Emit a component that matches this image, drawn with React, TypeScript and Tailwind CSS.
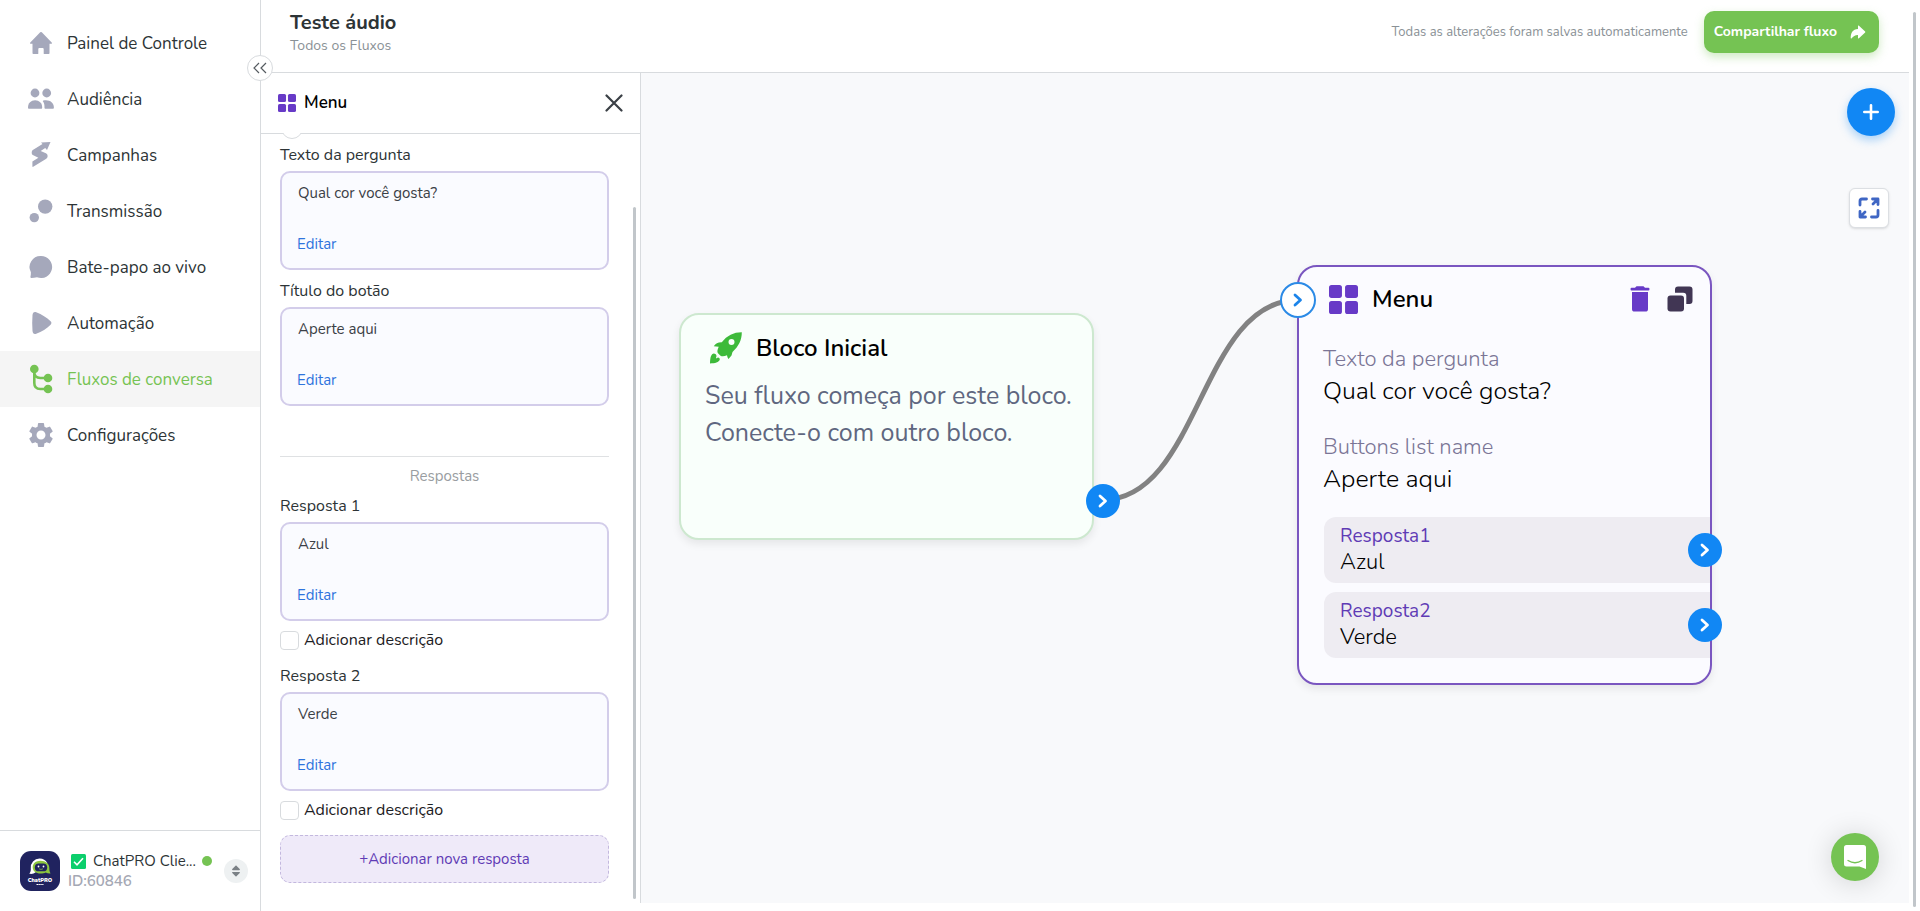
import { ReactNode, useState } from "react";
import clsx from "clsx";
import { FaSort } from "react-icons/fa";
import { IoArrowRedo } from "react-icons/io5";
import { MdSettings } from "react-icons/md";

const pageData = {
  title: "Teste áudio",
  breadcrumb: "Todos os Fluxos",
  saved: "Todas as alterações foram salvas automaticamente",
  share: "Compartilhar fluxo",
  questions: [
    { label: "Texto da pergunta", value: "Qual cor você gosta?" },
    { label: "Título do botão", value: "Aperte aqui" },
  ],
  answers: ["Azul", "Verde"],
};

function NavIcon({ children }: { children: ReactNode }) {
  return (
    <svg
      viewBox="0 0 26 26"
      className="size-[26px] shrink-0 overflow-visible"
      fill="currentColor"
    >
      {children}
    </svg>
  );
}

const navItems = [
  {
    label: "Painel de Controle",
    icon: (
      <NavIcon>
        <path d="M12.2 2.3a1.2 1.2 0 0 1 1.6 0L23.7 12.4c.6.7.2 1.4-.6 1.4h-1.6v9.4c0 .5-.3.8-.8.8h-4.4c-.4 0-.6-.2-.6-.6v-4.2c0-.7-.5-1.2-1.2-1.2h-3c-.7 0-1.2.5-1.2 1.2v4.2c0 .4-.2.6-.6.6H5.3c-.5 0-.8-.3-.8-.8v-9.4H2.9c-.8 0-1.2-.7-.6-1.4z" />
      </NavIcon>
    ),
  },
  {
    label: "Audiência",
    icon: (
      <NavIcon>
        <circle cx="7" cy="7" r="4.4" />
        <circle cx="18.7" cy="7" r="4.4" />
        <path d="M0 21.5c0-4.3 3-7.3 7.1-7.3s7.1 3 7.1 7.3c0 .9-.4 1.3-1.1 1.3h-12C.4 22.800 0 22.4 0 21.5z" />
        <path d="M15.3 14.6c5.6-1.3 10.6 1.600 10.6 6.9 0 .9-.4 1.3-1.1 1.3h-7.2c-.7 0-1.1-.4-1.1-1.1 0-2.7-.2-4.5-1.500-6.1-.3-.4-.1-.9.3-1z" />
      </NavIcon>
    ),
  },
  {
    label: "Campanhas",
    icon: (
      <NavIcon>
        <path d="M13 .4 22.5 0 19 8l-1.800-2-4.500 3 5.2 2.300c2.100 1 2.400 4.200.4 5.400L5.2 24.8c-.5.2-.8 0-.8-.5v-4.800l6-3.800-5.600-2.600c-1.500-.9-1.500-4.200 0-5.200l9.7-5.900z" />
      </NavIcon>
    ),
  },
  {
    label: "Transmissão",
    icon: (
      <NavIcon>
        <circle cx="17.2" cy="8.6" r="7.2" />
        <circle cx="6.3" cy="19.6" r="4.7" />
      </NavIcon>
    ),
  },
  {
    label: "Bate-papo ao vivo",
    icon: (
      <NavIcon>
        <path d="M13 2a11 11 0 1 1-4 21.2c-2 .3-4 .7-5.8.8-.6 0-.9-.4-.8-.9.3-1.7.6-3.3.5-4.9A11 11 0 0 1 13 2z" />
      </NavIcon>
    ),
  },
  {
    label: "Automação",
    icon: (
      <NavIcon>
        <path d="M4.5 5c.3-2.5 1.5-3.5 3.7-2.8C14 4.4 18.6 7.4 22.6 11.3c1.1 1.2 1.1 2.2 0 3.4-4 3.9-8.6 6.9-14.4 9.1-2.2.7-3.4-.3-3.7-2.8-.4-5.3-.4-10.7 0-16z" />
      </NavIcon>
    ),
  },
  {
    label: "Fluxos de conversa",
    active: true,
    icon: (
      <NavIcon>
        <circle cx="6.3" cy="3" r="4.3" />
        <circle cx="20" cy="12" r="4.3" />
        <circle cx="20" cy="23" r="4.3" />
        <path
          d="M6.3 3v14c0 4 2 6 6 6H20M6.3 6c0 4 2 6 6 6H20"
          fill="none"
          stroke="currentColor"
          strokeWidth="2.6"
        />
      </NavIcon>
    ),
  },
  {
    label: "Configurações",
    icon: (
      <span className="flex size-[26px] shrink-0 items-center justify-center">
        <MdSettings className="size-[30px] shrink-0" />
      </span>
    ),
  },
];

function GridIcon({ className }: { className?: string }) {
  return (
    <svg viewBox="0 0 28 28" className={className} fill="#673ac7">
      <rect width="12.5" height="12.5" rx="2.5" />
      <rect x="15.5" width="12.5" height="12.5" rx="2.5" />
      <rect y="15.5" width="12.5" height="12.5" rx="2.5" />
      <rect x="15.5" y="15.5" width="12.5" height="12.5" rx="2.5" />
    </svg>
  );
}

function RocketIcon() {
  return (
    <svg viewBox="0 0 32 32" className="size-8 shrink-0" fill="#3dba3a">
      <path
        fillRule="evenodd"
        d="M31.8.3c.1 7.700-3.300 14.200-9.300 19.7l-1 3.500-3 3.500c-.9-1-1.200-2.500-1.500-3.700-2.500 1.200-5 1.400-6.500.5L7.8 21c-.8-1.500-.3-3.500.9-6.200l-4.900-.6c1.700-2.700 4.200-4 8-3.900C17 3.500 24 .2 31.800.3zM21.500 7a3 3 0 1 0 0 6 3 3 0 0 0 0-6z"
      />
      <path d="M4 21.500C1 22 .2 25 0 31.500c5-.3 9-1 9.800-4 .2-1-.8-2.200-2-2l-1.300 1-.5-1c.8-1 .5-2.500-.2-3.300z" />
    </svg>
  );
}

function Chevron() {
  return (
    <svg viewBox="0 0 10 14" className="h-3.5 w-2.5" fill="none">
      <path
        d="m2 2 5.5 5L2 12"
        stroke="currentColor"
        strokeWidth="2.8"
        strokeLinecap="round"
        strokeLinejoin="round"
      />
    </svg>
  );
}

function OutPort({ className }: { className: string }) {
  return (
    <button
      aria-label="Conectar"
      className={clsx(
        "absolute flex size-[34px] items-center justify-center rounded-full bg-[#1187f4] text-white",
        className
      )}
    >
      <Chevron />
    </button>
  );
}

function Avatar() {
  return (
    <svg viewBox="0 0 40 40" className="size-10 shrink-0">
      <rect width="40" height="40" rx="11" fill="#20235f" />
      <path
        d="M19.5 7.5a8.8 8.8 0 0 0-8.7 9.7c.2 2.3-.3 4-1.5 5.6 3 .3 4.7-.1 6-1.2l12-9.6a8.8 8.8 0 0 0-7.8-4.5z"
        fill="#fff"
      />
      <path
        d="M20.5 9.8c5.3 0 8.8 3.1 8.8 7 0 2 .2 3.9 1.2 5.6-2 .1-3.5-.2-4.7-.9-1.4.8-3.2 1.1-5.3 1.1-4.6 0-7.8-2.5-7.8-6.3 0-3.7 3.2-6.5 7.8-6.5z"
        fill="#8cc63f"
      />
      <rect x="14.8" y="12.5" width="12.4" height="7.8" rx="3.9" fill="#20235f" />
      <circle cx="18.5" cy="15.5" r=".9" fill="#fff" />
      <circle cx="23.5" cy="15.5" r=".9" fill="#fff" />
      <path d="M19 17.8q2 1.3 4 0" stroke="#8cc63f" strokeWidth=".7" fill="none" />
      <text x="20" y="30.5" textAnchor="middle" fontSize="5.500" fontWeight="900" fill="#fff">
        ChatPRO
      </text>
      <path d="M16.5 33.5h7" stroke="#fff" strokeWidth="1" strokeDasharray="1.5 .4" />
    </svg>
  );
}

function Sidebar() {
  return (
    <aside className="relative z-20 flex w-[261px] shrink-0 flex-col border-r border-[#d8dbde] bg-white">
      <nav className="flex-1 pt-[15px]">
        {navItems.map((item) => (
          <a
            key={item.label}
            href="#"
            className={clsx(
              "flex h-14 items-center gap-[13px] pl-7 text-[17px]",
              item.active ? "bg-[#f5f5f5] text-[#75c353]" : "text-[#2d3436]"
            )}
          >
            <span className={item.active ? "text-[#75c353]" : "text-[#a5a8bb]"}>
              {item.icon}
            </span>
            <span className="pt-0.5">{item.label}</span>
          </a>
        ))}
      </nav>

      {/* account */}
      <div className="flex h-[81px] items-center gap-2 border-t border-[#d8dbde] pr-3 pl-5">
        <Avatar />
        <div className="min-w-0 flex-1 text-[15px] leading-5">
          <div className="flex items-center pl-[3px] text-[#2d3436]">
            <svg viewBox="0 0 15 15" className="mr-[7px] size-[15px] shrink-0">
              <rect width="15" height="15" rx="1.5" fill="#0ccf6c" />
              <path d="m3 7.8 3 3 6-6.5" stroke="#fff" strokeWidth="1.6" fill="none" />
            </svg>
            <span className="whitespace-nowrap">ChatPRO Clie...</span>
            <span className="ml-1.5 size-2.5 shrink-0 rounded-full bg-[#75c353]"></span>
          </div>
          <p className="font-semibold text-[#a5a8b4]">ID:60846</p>
        </div>
        <button
          aria-label="Trocar conta"
          className="flex size-6 shrink-0 items-center justify-center rounded-full bg-[#eef1f2] text-[#7b8186]"
        >
          <FaSort className="size-3.5" />
        </button>
      </div>

      <button
        aria-label="Recolher menu"
        className="absolute top-[55px] -right-[13px] flex size-[26px] items-center justify-center rounded-full border border-[#d8dbde] bg-white text-[#555b60]"
      >
        <svg
          viewBox="0 0 14 12"
          className="h-3 w-3.5"
          fill="none"
          stroke="currentColor"
          strokeWidth="1.2"
        >
          <path d="M6 1 1 6l5 5M13 1 8 6l5 5" />
        </svg>
      </button>
    </aside>
  );
}

function Header() {
  return (
    <header className="flex h-[73px] justify-between border-b border-[#d8dbde] bg-white pr-[30px] pl-[29px]">
      <div className="pt-[11px]">
        <h1 className="text-xl leading-6 font-bold text-[#2d3436]">{pageData.title}</h1>
        <p className="text-sm leading-[22px] text-[#8a9196]">{pageData.breadcrumb}</p>
      </div>
      <div className="flex items-start gap-4 pt-[11px]">
        <p className="text-[13px] leading-[42px] text-[#8a9196]">{pageData.saved}</p>
        <button className="flex h-[42px] items-center gap-3 rounded-[10px] bg-[#75c353] pr-3 pl-2.5 text-sm font-bold text-white shadow-[0_4px_10px_rgba(117,195,83,0.35)]">
          {pageData.share}
          <IoArrowRedo className="size-[18px]" />
        </button>
      </div>
    </header>
  );
}

function Field({ id, label, value }: { id: string; label: string; value: string }) {
  return (
    <div>
      <label htmlFor={id} className="mb-1 block leading-6 text-[#2d3436]">
        {label}
      </label>
      <div className="rounded-[10px] border-2 border-[#d3cdea] bg-[#fafbff] px-[15px] pt-2 pb-3 text-[15px] leading-6">
        <textarea
          id={id}
          defaultValue={value}
          className="block h-12 w-full resize-none overflow-hidden bg-transparent px-px text-[#3b4046] outline-none"
        />
        <button className="mt-[3px] block text-[#2f74dd]">Editar</button>
      </div>
    </div>
  );
}

function AnswerField({ index, value }: { index: number; value: string }) {
  return (
    <div>
      <Field id={`answer-${index}`} label={`Resposta ${index}`} value={value} />
      <label className="mt-[9px] flex h-5 items-center gap-[5px] text-[#1c2023]">
        <input
          type="checkbox"
          className="size-[19px] appearance-none rounded-[4px] border border-[#d8dbde] bg-white"
        />
        Adicionar descrição
      </label>
    </div>
  );
}

function EditPanel() {
  return (
    <section className="relative w-[380px] shrink-0 border-r border-[#d8dbde] bg-white">
      <div className="flex h-[61px] items-center border-b border-[#d8dbde] bg-white px-[17px]">
        <GridIcon className="size-[18px]" />
        <h2 className="ml-2 flex-1 text-[17px] font-semibold text-black">Menu</h2>
        <button aria-label="Fechar" className="text-[#3b4046]">
          <svg
            viewBox="0 0 18 18"
            className="size-[18px]"
            fill="none"
            stroke="currentColor"
            strokeWidth="2.2"
            strokeLinecap="round"
          >
            <path d="m1.5 1.5 15 15M16.5 1.5l-15 15" />
          </svg>
        </button>
      </div>

      {/* step marker, mostly scrolled under the panel header */}
      <div className="absolute top-11 left-5 size-[22px] rounded-full border border-[#d8dbde] bg-white [clip-path:inset(16px_0_0_0)]"></div>

      <div className="pt-[9px] pr-[31px] pl-[19px]">
        <div className="flex flex-col gap-[9px]">
          {pageData.questions.map((q, i) => (
            <Field key={q.label} id={`question-${i}`} label={q.label} value={q.value} />
          ))}
        </div>
        <p className="mt-[50px] mb-1.5 border-t border-[#dfe1e3] pt-[7px] text-center text-[15px] leading-6 text-[#999da1]">
          Respostas
        </p>
        <div className="flex flex-col gap-3.5">
          {pageData.answers.map((answer, i) => (
            <AnswerField key={answer} index={i + 1} value={answer} />
          ))}
        </div>
        <button className="mt-[15px] h-12 w-full rounded-[10px] border border-dashed border-[#c3b8de] bg-[#efeaf9] text-[15px] text-[#5f3bb5]">
          +Adicionar nova resposta
        </button>
      </div>

      {/* scroll thumb */}
      <div className="absolute top-[134px] right-1 bottom-1 w-[3px] rounded-full bg-[#c1c6ca]"></div>
    </section>
  );
}

function StartNode() {
  return (
    <article className="absolute top-60 left-[38px] h-[227px] w-[415px] rounded-[20px] border-2 border-[#cde8cf] bg-[#f9fffb] pt-[17px] pl-6 shadow-[0_4px_8px_rgba(0,0,0,0.08)]">
      <h3 className="flex h-8 items-center gap-3.5 pl-[5px] text-2xl font-semibold text-black">
        <RocketIcon />
        Bloco Inicial
      </h3>
      <p className="mt-3.5 text-[25px] leading-[37px] text-[#5f6780]">
        Seu fluxo começa por este bloco. Conecte-o com outro bloco.
      </p>
      <OutPort className="-right-7 bottom-5" />
    </article>
  );
}

function MenuNode() {
  return (
    <article className="absolute top-48 left-[656px] w-[415px] rounded-[20px] border-2 border-[#7a56c0] bg-[#fbfbff] pt-4 pb-[25px] shadow-[0_4px_8px_rgba(0,0,0,0.08)]">
      <button
        aria-label="Entrada"
        className="absolute top-[15px] -left-[19px] flex size-9 items-center justify-center rounded-full border-2 border-[#2b8ae6] bg-white text-[#1b84ea]"
      >
        <Chevron />
      </button>
      <div className="flex h-8 items-center pr-[17px] pl-[30px]">
        <GridIcon className="size-[29px]" />
        <h3 className="ml-3.5 flex-1 text-2xl font-semibold text-black">Menu</h3>
        <button aria-label="Excluir">
          <svg viewBox="0 0 20 26" className="h-[26px] w-5" fill="#673ac7">
            <path d="M1.5 1.700H5L6.500.3h7L15 1.700h3.500q.9 0 .9.900v1.200q0 .7-.9.700h-17q-.9 0-.9-.7V2.600q0-.9.900-.9z" />
            <path d="M2 6h16v17q0 2.600-2.600 2.600H4.600Q2 25.600 2 23z" />
          </svg>
        </button>
        <button aria-label="Duplicar" className="ml-[17px]">
          <svg viewBox="0 0 26 26" className="size-[26px]" fill="#413654">
            <rect x=".5" y="9.5" width="16.5" height="16" rx="3" />
            <path d="M8 6.700V3.500Q8 .5 11 .5h11.500q3 0 3 3V15q0 3-3 3h-3.200V9.700q0-3-3-3z" />
          </svg>
        </button>
      </div>
      <div className="mt-7 flex flex-col gap-6 pl-6 leading-8 font-light">
        <div>
          <p className="text-[22px] text-[#7a7596]">Texto da pergunta</p>
          <p className="text-[25px] text-black">Qual cor você gosta?</p>
        </div>
        <div>
          <p className="text-[22px] text-[#7a7596]">Buttons list name</p>
          <p className="text-[25px] text-black">Aperte aqui</p>
        </div>
      </div>
      <div className="mt-[22px] flex flex-col gap-[9px] pl-[25px]">
        {pageData.answers.map((answer, i) => (
          <div
            key={answer}
            className="relative rounded-l-xl bg-[#eeecf2] pt-1.5 pb-2 pl-4 leading-[26px]"
          >
            <p className="text-[19px] text-[#5f3bb5]">Resposta{i + 1}</p>
            <p className="text-[22px] font-light text-black">{answer}</p>
            <OutPort className="top-4 -right-3" />
          </div>
        ))}
      </div>
    </article>
  );
}

function Canvas() {
  return (
    <section className="relative flex-1 overflow-hidden bg-[#f8f9fb]">
      <svg className="absolute inset-0 size-full" fill="none">
        <path d="M461 427C559 427 559 227 657 227" stroke="#828282" strokeWidth="5" />
      </svg>
      <StartNode />
      <MenuNode />

      <button
        aria-label="Adicionar bloco"
        className="absolute top-[15px] right-3.5 flex size-12 items-center justify-center rounded-full bg-[#1187f4] shadow-[0_4px_10px_rgba(17,135,244,0.35)]"
      >
        <svg
          viewBox="0 0 16 16"
          className="size-4"
          stroke="#fff"
          strokeWidth="2.6"
          strokeLinecap="round"
        >
          <path d="M8 1.3v13.4M1.3 8h13.4" />
        </svg>
      </button>
      <button
        aria-label="Tela cheia"
        className="absolute top-[115px] right-5 flex size-10 items-center justify-center rounded-md border border-[#dcdfe3] bg-white shadow-sm"
      >
        <svg
          viewBox="0 0 22 22"
          className="size-[22px]"
          fill="none"
          stroke="#3f66c4"
          strokeWidth="2.8"
          strokeLinecap="round"
          strokeLinejoin="round"
        >
          <path d="M2 8V4q0-2 2-2h4.5M14.5 2H20v5.5M20 2l-5 5M2 14.500V20h5.5M2 20l5-5M20 13.5V18q0 2-2 2h-4.5" />
        </svg>
      </button>
      <button
        aria-label="Abrir chat"
        className="absolute right-[30px] bottom-[22px] flex size-12 items-center justify-center rounded-full bg-[#75c353] shadow-[0_2px_28px_rgba(0,0,0,0.16)]"
      >
        <svg viewBox="0 0 22 24" className="h-6 w-[22px]">
          <path
            d="M2.5 0h17Q22 0 22 2.500V24l-6.500-2.500h-13Q0 21.500 0 19V2.500Q0 0 2.500 0z"
            fill="#fff"
          />
          <path
            d="M4 15.5q7 4.500 14 0"
            fill="none"
            stroke="#75c353"
            strokeWidth="1.3"
            strokeLinecap="round"
          />
        </svg>
      </button>
    </section>
  );
}

export default function FlowEditor() {
  const [panelOpen] = useState(true);

  return (
    <div className="flex h-screen overflow-hidden bg-white font-['Nunito','Open_Sans',sans-serif]">
      <Sidebar />
      <main className="flex min-w-0 flex-1 flex-col pb-2">
        <Header />
        <div className="flex min-h-0 flex-1">
          {panelOpen && <EditPanel />}
          <Canvas />
        </div>
      </main>
      <div className="flex w-[11px] shrink-0 pt-3 pb-1 pl-1">
        <div className="w-[3px] rounded-full bg-[#c1c6ca]"></div>
      </div>
    </div>
  );
}
